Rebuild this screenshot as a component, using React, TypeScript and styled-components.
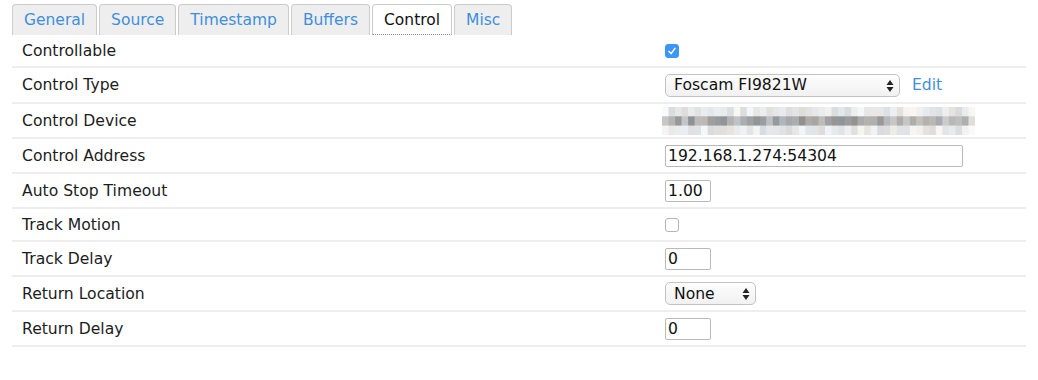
import React from 'react';
import styled, { createGlobalStyle } from 'styled-components';

const GlobalStyle = createGlobalStyle`
    body {
        margin: 0;
        padding: 0;
        background: #ffffff;
        font-family: 'DejaVu Sans', Verdana, sans-serif;
        font-size: 15px;
        color: #222;
    }
`;

const Page = styled.div`
    padding: 4px 12px 0 12px;
    width: 1014px;
`;

const TabBar = styled.div`
    display: flex;
    gap: 2px;
    height: 31px;
`;

const Tab = styled.div<{ $active?: boolean }>`
    box-sizing: border-box;
    height: 31px;
    padding: 0 11px 0 11px;
    display: flex;
    align-items: center;
    border: 1px solid #cccccc;
    border-bottom: ${(p) => (p.$active ? '1px dotted #8a8aa8' : 'none')};
    border-radius: 4px 4px 0 0;
    background: ${(p) => (p.$active ? '#ffffff' : '#eeeeee')};
    color: ${(p) => (p.$active ? '#111111' : '#3f8fdb')};
    font-size: 15.5px;
    cursor: pointer;
`;

const Table = styled.div`
    display: flex;
    flex-direction: column;
`;

const Row = styled.div<{ $h: number }>`
    display: grid;
    grid-template-columns: 653px 1fr;
    align-items: center;
    height: ${(p) => p.$h}px;
    border-bottom: 2px solid #eeeeee;
`;

const Label = styled.div`
    padding-left: 10px;
    font-size: 15.6px;
    color: #1c1c1c;
`;

const Value = styled.div`
    display: flex;
    align-items: center;
    gap: 12px;
`;

const Box = styled.span<{ $checked?: boolean }>`
    box-sizing: border-box;
    width: 14px;
    height: 14px;
    border-radius: 3px;
    display: inline-flex;
    align-items: center;
    justify-content: center;
    background: ${(p) => (p.$checked ? '#3b96f7' : '#ffffff')};
    border: 1px solid ${(p) => (p.$checked ? '#3b96f7' : '#b4b4b4')};
`;

const SelectWrap = styled.div<{ $w: number }>`
    position: relative;
    box-sizing: border-box;
    width: ${(p) => p.$w}px;
    height: 23px;
    border: 1px solid #c3c3c3;
    border-radius: 5px;
    background: linear-gradient(#fdfdfd, #f1f1f1);
    display: flex;
    align-items: center;
    padding-left: 8px;
    font-size: 15.6px;
    color: #111;
`;

const Arrows = styled.svg`
    position: absolute;
    right: 5px;
    top: 4px;
`;

const TextInput = styled.input<{ $w: number }>`
    box-sizing: border-box;
    width: ${(p) => p.$w}px;
    height: 22px;
    margin: 0;
    padding: 0 2px;
    border: 1px solid #b9b9b9;
    border-radius: 2px;
    font-family: 'DejaVu Sans', Verdana, sans-serif;
    font-size: 15.6px;
    color: #111;
    background: #fff;
    outline: none;
`;

const EditLink = styled.a`
    color: #3f8fdb;
    text-decoration: none;
    font-size: 15.6px;
`;

const Checkbox = ({ checked }: { checked?: boolean }) => (
    <Box $checked={checked}>
        {checked && (
            <svg width="10" height="10" viewBox="0 0 10 10">
                <path d="M2 5.4 L4.1 7.6 L8 2.4" fill="none" stroke="#fff" strokeWidth="1.5" strokeLinecap="round" strokeLinejoin="round" />
            </svg>
        )}
    </Box>
);

const Select = ({ value, width }: { value: string; width: number }) => (
    <SelectWrap $w={width}>
        {value}
        <Arrows width="8" height="14" viewBox="0 0 8 14">
            <path d="M4 1 L7.5 6 L0.5 6 Z" fill="#222" />
            <path d="M4 13 L7.5 8 L0.5 8 Z" fill="#222" />
        </Arrows>
    </SelectWrap>
);

// pixelated (blurred-out) device path
const Mosaic = () => {
    const cols = 48;
    const cw = 313 / cols;
    let seed = 7;
    const rnd = () => {
        seed = (seed * 9301 + 49297) % 233280;
        return seed / 233280;
    };
    const cells: React.ReactNode[] = [];
    for (let r = 0; r < 3; r++) {
        for (let c = 0; c < cols; c++) {
            const v = rnd();
            let g: number;
            if (r === 1) g = 145 + Math.floor(v * 60);
            else g = 218 + Math.floor(v * 30);
            if (c === 0 || c === cols - 1) g = Math.min(250, g + 25);
            const tint = Math.floor(rnd() * 10) - 5;
            cells.push(
                <rect
                    key={`${r}-${c}`}
                    x={c * cw}
                    y={r * 9.3}
                    width={cw + 0.5}
                    height={9.8}
                    fill={`rgb(${g + tint},${g},${g - tint})`}
                />
            );
        }
    }
    return (
        <svg width="313" height="28" viewBox="0 0 313 28" style={{ marginLeft: -3 }}>
            {cells}
        </svg>
    );
};

const tabs = ['General', 'Source', 'Timestamp', 'Buffers', 'Control', 'Misc'];

const App: React.FC = () => {
    return (
        <>
            <GlobalStyle />
            <Page>
                <TabBar>
                    {tabs.map((t) => (
                        <Tab key={t} $active={t === 'Control'}>
                            {t}
                        </Tab>
                    ))}
                </TabBar>
                <Table>
                    <Row $h={31}>
                        <Label>Controllable</Label>
                        <Value>
                            <Checkbox checked />
                        </Value>
                    </Row>
                    <Row $h={34}>
                        <Label>Control Type</Label>
                        <Value>
                            <Select value="Foscam FI9821W" width={235} />
                            <EditLink href="#edit">Edit</EditLink>
                        </Value>
                    </Row>
                    <Row $h={33}>
                        <Label>Control Device</Label>
                        <Value>
                            <Mosaic />
                        </Value>
                    </Row>
                    <Row $h={33}>
                        <Label>Control Address</Label>
                        <Value>
                            <TextInput $w={298} defaultValue="192.168.1.274:54304" />
                        </Value>
                    </Row>
                    <Row $h={33}>
                        <Label>Auto Stop Timeout</Label>
                        <Value>
                            <TextInput $w={46} defaultValue="1.00" />
                        </Value>
                    </Row>
                    <Row $h={31}>
                        <Label>Track Motion</Label>
                        <Value>
                            <Checkbox />
                        </Value>
                    </Row>
                    <Row $h={33}>
                        <Label>Track Delay</Label>
                        <Value>
                            <TextInput $w={46} defaultValue="0" />
                        </Value>
                    </Row>
                    <Row $h={33}>
                        <Label>Return Location</Label>
                        <Value>
                            <Select value="None" width={91} />
                        </Value>
                    </Row>
                    <Row $h={33}>
                        <Label>Return Delay</Label>
                        <Value>
                            <TextInput $w={46} defaultValue="0" />
                        </Value>
                    </Row>
                </Table>
            </Page>
        </>
    );
};

export default App;
